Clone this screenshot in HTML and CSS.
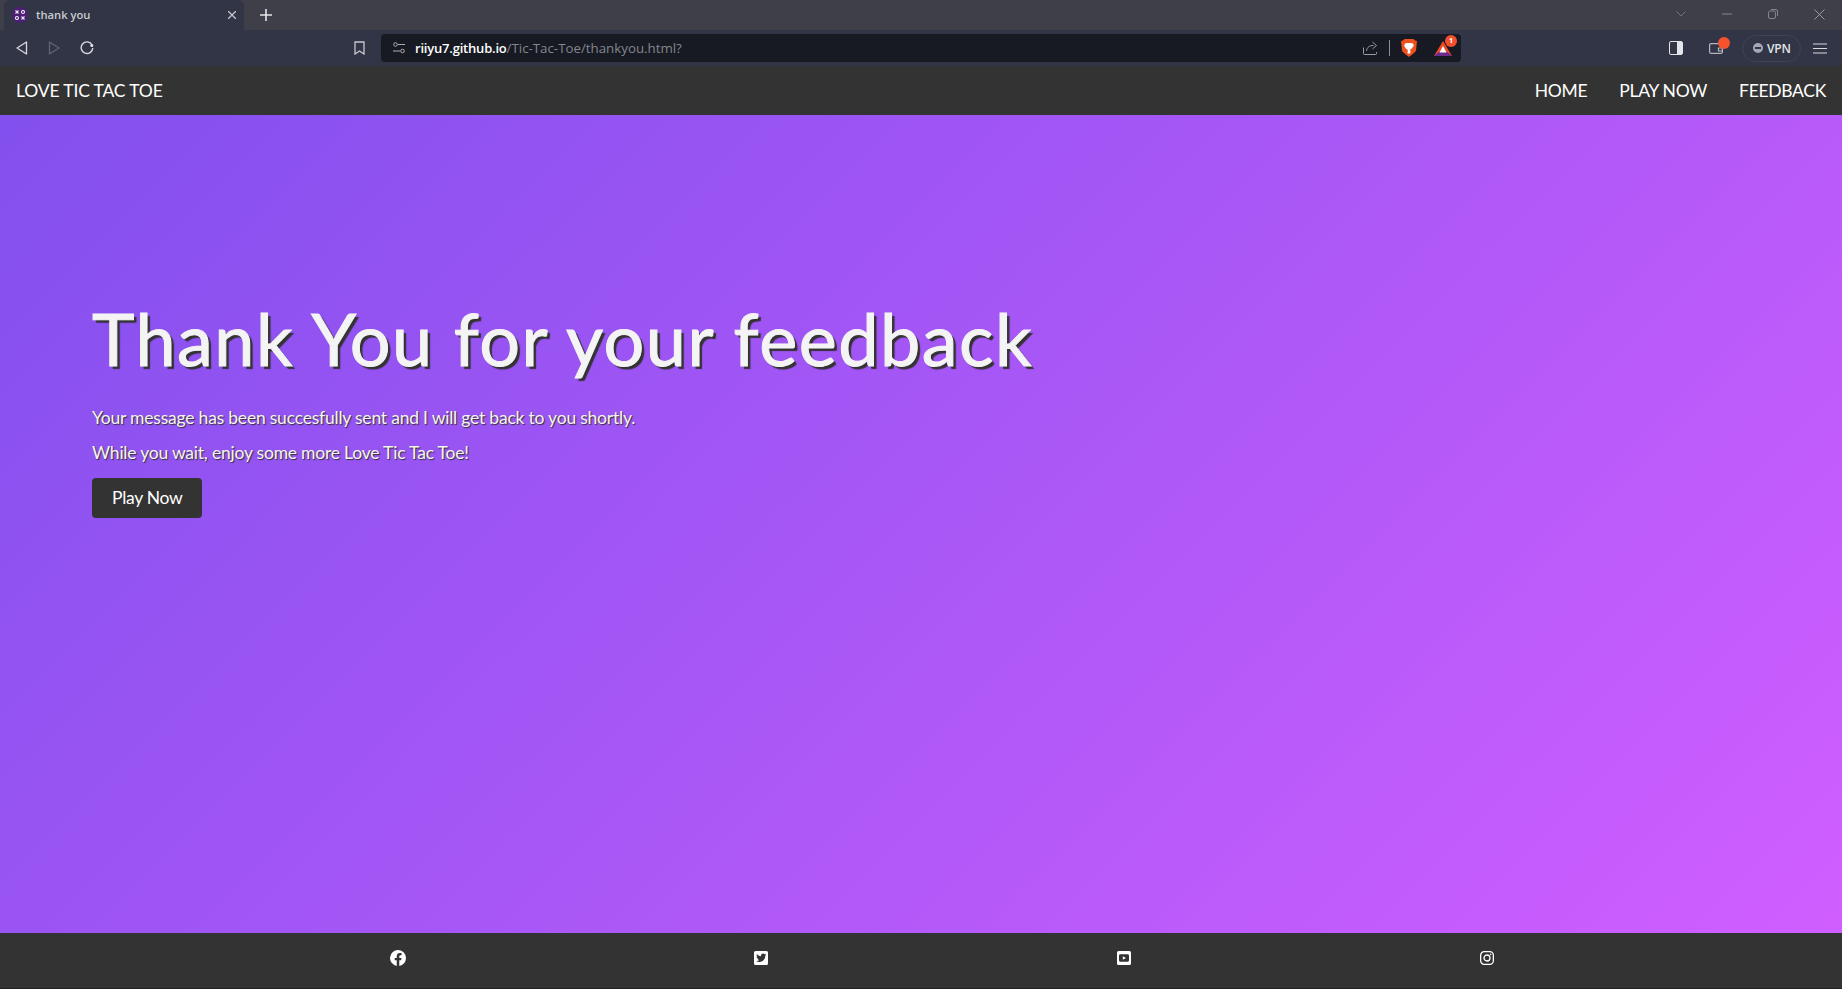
FILE: index.html
```html
<!DOCTYPE html>
<html lang="en">
<head>
  <meta charset="UTF-8">
  <title>thank you</title>
  <link rel="stylesheet" href="styles.css">
</head>
<body>
  <div class="tabstrip">
    <div class="tab">
      <span class="favicon">
        <svg width="10" height="10" viewBox="0 0 10 10" fill="none" stroke="#f0e6f6" stroke-width="1.100">
          <path d="M.5.500l3 3M3.500.500l-3 3M6.500 6.500l3 3M9.500 6.500l-3 3"/>
          <circle cx="8" cy="2" r="1.500"/>
          <circle cx="2" cy="8" r="1.500"/>
        </svg>
      </span>
      <span class="tab-title">thank you</span>
      <svg class="tab-close" width="8" height="8" viewBox="0 0 8 8" stroke="#c4c6cc" stroke-width="1.300"><path d="M0 0l8 8M8 0L0 8"/></svg>
    </div>
    <svg class="new-tab" width="12" height="12" viewBox="0 0 12 12" stroke="#e6e6e8" stroke-width="1.600"><path d="M6 0v12M0 6h12"/></svg>
    <div class="window-controls">
      <svg width="10" height="6" viewBox="0 0 10 6" fill="none" stroke="#6f7078"><path d="M.5.500L5 5 9.500.500"/></svg>
      <svg width="10" height="2" viewBox="0 0 10 2" stroke="#85868c"><path d="M0 1h10"/></svg>
      <svg width="10" height="10" viewBox="0 0 10 10" fill="none" stroke="#85868c"><rect x=".5" y="2" width="7" height="7.500" rx="1.500"/><path d="M3 .5h5a1.500 1.500 0 0 1 1.500 1.500v5"/></svg>
      <svg width="11" height="11" viewBox="0 0 11 11" stroke="#9a9ba0"><path d="M.5.500l10 10M10.500.500l-10 10"/></svg>
    </div>
  </div>

  <div class="toolbar">
    <div class="nav-buttons">
      <svg width="12" height="14" viewBox="0 0 12 14" fill="none" stroke="#d8d9dd" stroke-width="1.300" stroke-linejoin="round"><path d="M10.500 1L1 7l9.500 6z"/></svg>
      <svg width="12" height="14" viewBox="0 0 12 14" fill="none" stroke="#63656f" stroke-width="1.300" stroke-linejoin="round"><path d="M1.500 1L11 7l-9.500 6z"/></svg>
      <svg width="14" height="14" viewBox="0 0 14 14" fill="none" stroke="#d8d9dd" stroke-width="1.400"><path d="M11.900 3.600A5.800 5.800 0 1 0 12.800 7"/><circle cx="11.800" cy="4.400" r="1.500" fill="#e6e6e8" stroke="none"/></svg>
    </div>
    <svg class="bookmark" width="11" height="14" viewBox="0 0 11 14" fill="none" stroke="#c8c9ce" stroke-width="1.300"><path d="M1 1h9v12L5.500 10 1 13z"/></svg>
    <div class="address-bar">
      <svg class="site-settings" width="12" height="12" viewBox="0 0 12 12" fill="none" stroke="#a9abb2"><circle cx="2.500" cy="2.500" r="1.800"/><path d="M5 2.500h7M0 9h7"/><circle cx="9.500" cy="9" r="1.800"/></svg>
      <span class="url"><span class="url-host">riiyu7.github.io</span>/Tic-Tac-Toe/thankyou.html?</span>
      <div class="address-actions">
        <svg width="15" height="14" viewBox="0 0 15 14" fill="none" stroke="#9a9ca3"><path d="M.5 6.500v6a1 1 0 0 0 1 1h11a1 1 0 0 0 1-1V11"/><path d="M3.500 10c.5-4 3-5.500 7-5.500M9.500 1l4 3.500-4 3.500"/></svg>
        <span class="action-divider"></span>
        <svg width="16" height="18" viewBox="0 0 16 18"><path d="M3.500 0h9L14 1.500l2 .5-1 9.500c-.4 1.500-5 5-7 6.500-2-1.500-6.600-5-7-6.500L0 2l2-.5z" fill="#f0501e"/><path d="M4 4.500l2-.5h4l2 .5.800 2-2 3-1.300.5-.5 2 1 1L8 15l-2-1.500 1-1-.5-2-1.300-.5-2-3z" fill="#fff"/></svg>
        <span class="rewards">
          <svg width="18" height="15" viewBox="0 0 18 15"><path d="M9 0l9 15H0z" fill="#f04a24"/><path d="M0 15l4.500-4h9l4.500 4z" fill="#6c2a8c"/><path d="M9 5l3.500 6.500h-7z" fill="#fff"/></svg>
          <span class="rewards-badge">1</span>
        </span>
      </div>
    </div>
    <div class="toolbar-right">
      <span class="sidebar-icon"></span>
      <span class="wallet">
        <svg width="14" height="12" viewBox="0 0 14 12" fill="none" stroke="#b4b6bc" stroke-width="1.200"><rect x=".6" y="1.600" width="12.800" height="9.800" rx="1.500"/><path d="M13 6H9.500v3H13"/></svg>
        <span class="wallet-dot"></span>
      </span>
      <span class="vpn"><span class="vpn-dot"></span>VPN</span>
      <svg width="14" height="11" viewBox="0 0 14 11" stroke="#d8d9dd" stroke-width="1.200"><path d="M0 1h14M0 5.500h14M0 10h14"/></svg>
    </div>
  </div>

  <nav class="navbar">
    <a class="brand" href="#">LOVE TIC TAC TOE</a>
    <ul class="nav-links">
      <li><a href="#">HOME</a></li>
      <li><a href="#">PLAY NOW</a></li>
      <li><a href="#">FEEDBACK</a></li>
    </ul>
  </nav>

  <main class="hero">
    <h1>Thank You for your feedback</h1>
    <p>Your message has been succesfully sent and I will get back to you shortly.</p>
    <p>While you wait, enjoy some more Love Tic Tac Toe!</p>
    <a class="btn" href="#">Play Now</a>
  </main>

  <footer class="footer">
    <a href="#"><svg width="16" height="16" viewBox="0 0 16 16"><path fill="#fff" d="M16 8a8 8 0 1 0-9.250 7.900v-5.600H4.700V8h2.050V6.240c0-2 1.200-3.120 3.020-3.120.88 0 1.800.16 1.800.16v1.970h-1c-1 0-1.300.62-1.300 1.250V8h2.220l-.35 2.300H9.270v5.600A8 8 0 0 0 16 8z"/></svg></a>
    <a href="#"><svg width="14" height="14" viewBox="0 0 14 14"><path fill="#fff" fill-rule="evenodd" d="M1.500 0h11A1.500 1.500 0 0 1 14 1.500v11a1.500 1.500 0 0 1-1.500 1.500h-11A1.500 1.500 0 0 1 0 12.500v-11A1.500 1.500 0 0 1 1.500 0zM11.300 4.600c.4-.3.700-.6 1-1-.4.200-.8.300-1.200.3.400-.3.700-.6.900-1.100-.4.200-.8.400-1.300.5a2.100 2.100 0 0 0-3.600 1.900C5.400 5.100 3.900 4.300 2.900 3c-.6 1-.3 2.200.6 2.800-.3 0-.7-.1-1-.3 0 1 .7 1.900 1.700 2.100-.3.100-.6.100-.9 0 .3.900 1.100 1.400 2 1.500-.9.700-2 1-3.100.9.900.6 2 .9 3.200.9 3.900 0 6-3.200 5.900-6.300z"/></svg></a>
    <a href="#"><svg width="14" height="14" viewBox="0 0 14 14"><path fill="#fff" fill-rule="evenodd" d="M1.500 0h11A1.500 1.500 0 0 1 14 1.500v11a1.500 1.500 0 0 1-1.500 1.500h-11A1.500 1.500 0 0 1 0 12.500v-11A1.500 1.500 0 0 1 1.500 0zM3.500 3.200C2.600 3.200 2 3.900 2 4.700v4.600c0 .8.600 1.500 1.500 1.500h7c.9 0 1.500-.7 1.500-1.500V4.700c0-.8-.6-1.500-1.500-1.500zM5.800 5.200L9 7 5.800 8.800z"/></svg></a>
    <a href="#"><svg width="14" height="14" viewBox="0 0 14 14" fill="none" stroke="#fff" stroke-width="1.300"><rect x=".65" y=".65" width="12.700" height="12.700" rx="3.500"/><circle cx="7" cy="7" r="3"/><circle cx="10.700" cy="3.300" r=".8" fill="#fff" stroke="none"/></svg></a>
  </footer>
</body>
</html>
```

FILE: styles.css
```css
* {
  box-sizing: border-box;
}

html, body {
  height: 100%;
}

body {
  margin: 0;
  display: flex;
  flex-direction: column;
  height: 989px;
  overflow: hidden;
  font-family: Lato, "Open Sans", sans-serif;
  background-color: #333;
}

a {
  color: inherit;
  text-decoration: none;
}

/* browser chrome */
.tabstrip {
  display: flex;
  align-items: center;
  height: 30px;
  padding-left: 4px;
  background-color: #3f3f49;
}

.tab {
  display: flex;
  align-items: center;
  width: 240px;
  height: 30px;
  padding: 0 8px 0 8px;
  border-radius: 6px 6px 0 0;
  background-color: #313546;
}

.favicon {
  display: flex;
  align-items: center;
  justify-content: center;
  width: 16px;
  height: 16px;
  border-radius: 50%;
  background-color: #4b2072;
}

.tab-title {
  flex: 1;
  margin: 0 0 2px 8px;
  color: #c9cbd1;
  font: 600 11.200px "Open Sans", sans-serif;
}

.new-tab {
  margin-left: 16px;
}

.window-controls {
  display: flex;
  align-items: center;
  gap: 36px;
  margin-left: auto;
  padding: 0 17px 2px 0;
}

.toolbar {
  display: flex;
  align-items: center;
  height: 36px;
  padding-left: 16px;
  background-color: #313546;
}

.nav-buttons {
  display: flex;
  align-items: center;
  gap: 20px;
  width: 338px;
}

.bookmark {
  margin-right: 16px;
}

.address-bar {
  display: flex;
  align-items: center;
  width: 1080px;
  height: 28px;
  padding: 0 0 0 12px;
  border-radius: 4px;
  background-color: #171a23;
}

.site-settings {
  margin-right: 10px;
}

.url {
  color: #83858d;
  font: 13.300px "Open Sans", sans-serif;
}

.url-host {
  color: #fff;
  font-size: 13px;
  font-weight: 600;
  letter-spacing: -.2px;
}

.address-actions {
  display: flex;
  align-items: center;
  margin-left: auto;
  padding-right: 9px;
}

.action-divider {
  width: 1px;
  height: 16px;
  margin: 0 11px;
  background-color: #8d8f96;
}

.rewards {
  position: relative;
  display: flex;
  margin-left: 17px;
}

.rewards-badge {
  position: absolute;
  top: -6px;
  right: -5px;
  width: 12px;
  height: 12px;
  border-radius: 50%;
  background-color: #f0502e;
  color: #fff;
  font: 700 7px/12px "Open Sans", sans-serif;
  text-align: center;
}

.toolbar-right {
  display: flex;
  align-items: center;
  margin-left: auto;
  padding-right: 15px;
}

.sidebar-icon {
  width: 14px;
  height: 14px;
  border: 1.500px solid #e4e5e8;
  border-radius: 2px;
  background: linear-gradient(90deg, #313546 60%, #e4e5e8 60%);
  margin-right: 26px;
}

.wallet {
  position: relative;
  display: flex;
  margin-right: 19px;
}

.wallet-dot {
  position: absolute;
  top: -5px;
  right: -7px;
  width: 12px;
  height: 12px;
  border-radius: 50%;
  background-color: #f5522d;
}

.vpn {
  display: flex;
  align-items: center;
  gap: 4px;
  width: 59px;
  height: 27px;
  padding-left: 10px;
  border: 1px solid #3f4354;
  border-radius: 14px;
  color: #e2e3e6;
  font: 600 12px "Open Sans", sans-serif;
  letter-spacing: -.2px;
  margin-right: 12px;
}

.vpn-dot {
  display: flex;
  align-items: center;
  justify-content: center;
  width: 10px;
  height: 10px;
  border-radius: 50%;
  background-color: #a4a6b8;
}

.vpn-dot::before {
  content: "";
  width: 6px;
  height: 1.500px;
  background-color: #313546;
}

/* page */
.navbar {
  display: flex;
  align-items: center;
  justify-content: space-between;
  height: 49px;
  padding: 0 16px;
  background-color: #333;
  color: #fff;
  font-size: 17.500px;
  font-weight: 400;
  letter-spacing: -.3px;
}

.brand {
  letter-spacing: -.15px;
}

.nav-links {
  display: flex;
  gap: 32px;
  margin: 0;
  padding: 0;
  list-style: none;
}

.hero {
  flex: 1;
  padding: 180px 92px 0;
  background: linear-gradient(135deg, #8250ee 0%, #d05eff 100%);
  color: #f4f4f4;
}

.hero h1 {
  margin: 0 0 25px;
  font-size: 72px;
  font-weight: 400;
  line-height: 86px;
  letter-spacing: 1.500px;
  -webkit-text-stroke: 1px #f4f4f4;
  text-shadow: 3px 3px 1px #333;
}

.hero p {
  margin: 0 0 11px;
  font-size: 17.500px;
  font-weight: 400;
  line-height: 24px;
  letter-spacing: -.21px;
  text-shadow: 1px 1px 1px #333;
}

.btn {
  display: inline-block;
  margin-top: 2px;
  padding: 9px 20px;
  border-radius: 4px;
  background-color: #333;
  color: #fff;
  font-size: 17.500px;
  line-height: 22px;
  letter-spacing: -.3px;
}

.footer {
  display: grid;
  grid-template-columns: repeat(4, 363px);
  align-items: center;
  justify-items: center;
  height: 56px;
  padding: 0 0 6px 216px;
  background-color: #333;
  border-bottom: 1px solid #222;
}

.footer a {
  display: flex;
}
```
